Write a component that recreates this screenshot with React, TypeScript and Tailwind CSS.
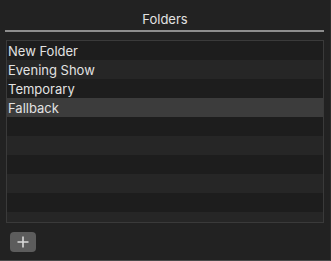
export default function App() {
  const folders = ['New Folder', 'Evening Show', 'Temporary', 'Fallback'];
  const selected = 3;
  const rows = Array.from({ length: 10 }, (_, i) => folders[i] ?? '');

  return (
    <div
      className="w-[331px] h-[261px] bg-[#222222] border-r border-b border-r-[#2e2e2e] border-b-[#4a4a4a] flex flex-col px-[5px] text-[#e2e2e2] overflow-hidden"
      style={{ fontFamily: 'Inter, "Noto Sans", sans-serif' }}
    >
      {/* Title */}
      <div className="mt-[11px] h-[16px] leading-[16px] text-[13px] text-center">Folders</div>
      <div className="mt-[3px] h-[2px] w-[319px] bg-[#8d8d8d]" />

      {/* Folder list */}
      <div className="mt-[8px] ml-[1px] w-[318px] h-[183px] border border-[#3a3a3a] overflow-hidden">
        {rows.map((name, i) => (
          <div
            key={i}
            className={`h-[19px] leading-[20px] pl-[1px] text-[13px] whitespace-nowrap ${
              i === selected ? 'bg-[#3c3c3c]' : i % 2 === 0 ? 'bg-[#1d1d1d]' : 'bg-[#262626]'
            }`}
          >
            {name}
          </div>
        ))}
      </div>

      {/* Add button */}
      <div className="mt-[9px] ml-[5px] w-[26px] h-[20px] rounded-[4px] bg-[#5c5c5c] flex items-center justify-center">
        <svg width="12" height="12" viewBox="0 0 12 12" className="text-[#dadada]">
          <path d="M6 0.5v11M0.5 6h11" stroke="currentColor" strokeWidth="1.6" fill="none" />
        </svg>
      </div>
    </div>
  );
}
